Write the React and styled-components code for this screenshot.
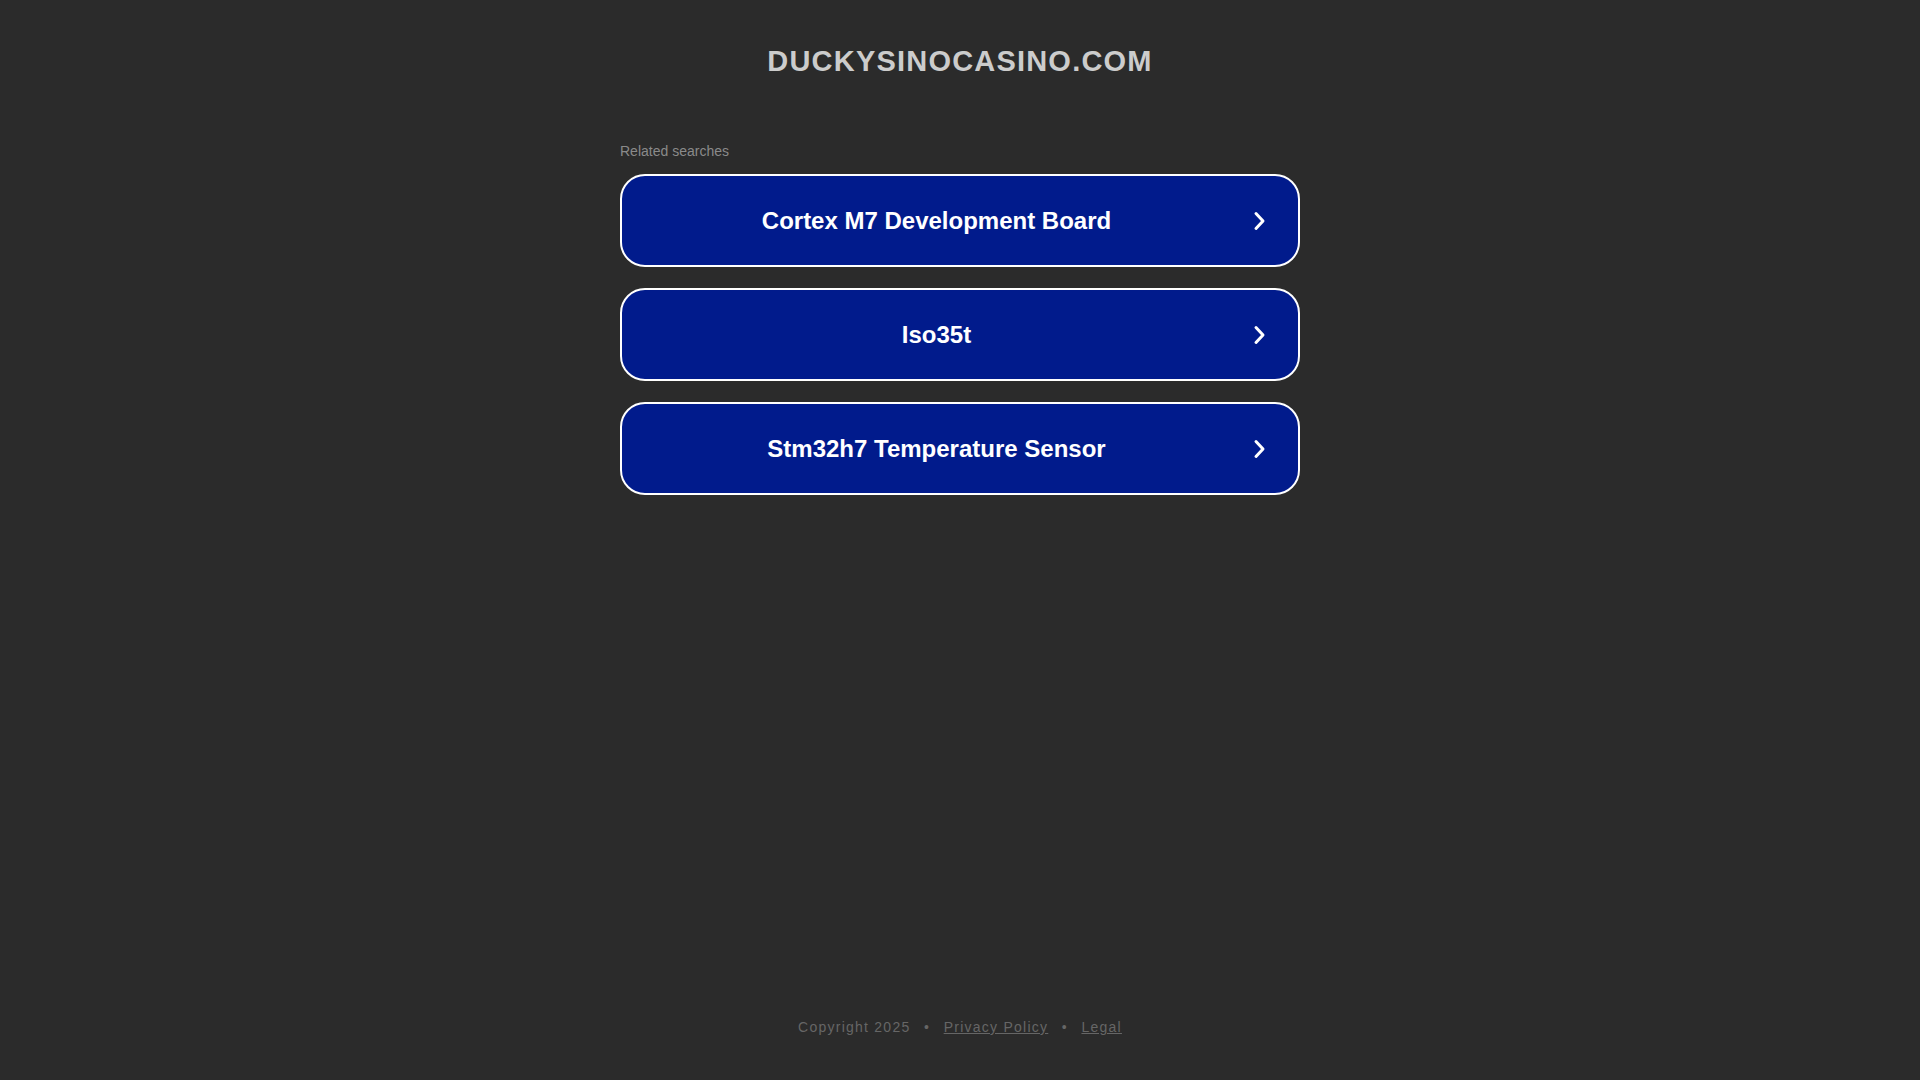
import React from 'react'
import styled, { createGlobalStyle } from 'styled-components'

const GlobalStyle = createGlobalStyle`
  html, body {
    margin: 0;
    padding: 0;
    background: #2b2b2b;
    font-family: "Liberation Sans", Arial, sans-serif;
  }
`

const Page = styled.div`
  display: flex;
  flex-direction: column;
  align-items: center;
  min-height: 100vh;
  box-sizing: border-box;
  padding-top: 47px;
  padding-bottom: 46px;
`

const Domain = styled.h1`
  margin: 0;
  font-size: 29px;
  line-height: 1;
  font-weight: bold;
  letter-spacing: 1.2px;
  color: #cccccc;
  text-transform: uppercase;
`

const Results = styled.div`
  width: 680px;
  margin-top: 67.5px;
  display: flex;
  flex-direction: column;
`

const Label = styled.div`
  font-size: 14px;
  line-height: 1;
  color: #8a8a8a;
  margin-bottom: 16.5px;
`

const List = styled.div`
  display: flex;
  flex-direction: column;
  gap: 21px;
`

const Item = styled.a`
  display: flex;
  align-items: center;
  height: 93px;
  box-sizing: border-box;
  border: 2px solid #ffffff;
  border-radius: 25px;
  background: #011b8c;
  color: #ffffff;
  text-decoration: none;
  padding-right: 31px;
  cursor: pointer;
`

const ItemText = styled.span`
  flex: 1;
  text-align: center;
  font-size: 24px;
  font-weight: bold;
`

const Arrow = styled.svg`
  width: 16px;
  height: 24px;
  flex: none;
`

const Footer = styled.div`
  margin-top: auto;
  font-size: 14px;
  line-height: 1;
  letter-spacing: 1.25px;
  color: #666666;
  display: flex;
  align-items: center;
`

const Sep = styled.span`
  padding: 0 13.5px;
`

const FootLink = styled.a`
  color: #666666;
  text-decoration: underline;
`

const searches = [
  'Cortex M7 Development Board',
  'Iso35t',
  'Stm32h7 Temperature Sensor',
]

export default function App() {
  return (
    <>
      <GlobalStyle />
      <Page>
        <Domain>duckysinocasino.com</Domain>
        <Results>
          <Label>Related searches</Label>
          <List>
            {searches.map((s) => (
              <Item key={s}>
                <ItemText>{s}</ItemText>
                <Arrow viewBox="0 0 16 24">
                  <polyline
                    points="5,4.5 12,12 5,19.5"
                    fill="none"
                    stroke="#ffffff"
                    strokeWidth="3"
                    strokeLinecap="round"
                    strokeLinejoin="round"
                  />
                </Arrow>
              </Item>
            ))}
          </List>
        </Results>
        <Footer>
          <span>Copyright 2025</span>
          <Sep>•</Sep>
          <FootLink>Privacy Policy</FootLink>
          <Sep>•</Sep>
          <FootLink>Legal</FootLink>
        </Footer>
      </Page>
    </>
  )
}
